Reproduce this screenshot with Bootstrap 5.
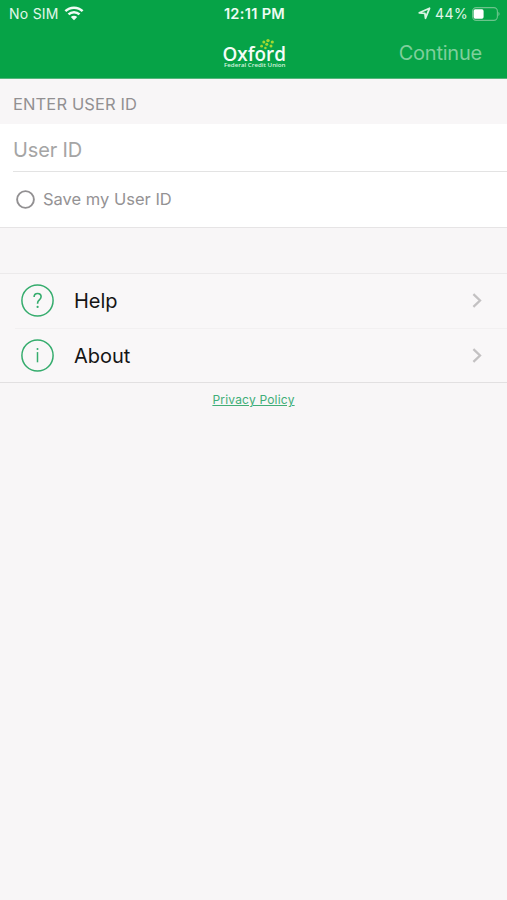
<!DOCTYPE html>
<html lang="en">
<head>
<meta charset="utf-8">
<meta name="viewport" content="width=device-width, initial-scale=1">
<title>Oxford Federal Credit Union</title>
<link href="https://cdn.jsdelivr.net/npm/bootstrap@5.3.0/dist/css/bootstrap.min.css" rel="stylesheet">
<style>
body{font-family:Inter,"Liberation Sans",sans-serif;background:#f8f6f7;color:#151515;min-height:900px;overflow-x:hidden}
svg{display:block;flex-shrink:0}
.top-area{background:#06a347;height:79px;border-bottom:1px solid #55b57c}
.status-bar{height:27px;font-size:14px;line-height:27px;color:#e2f7ea;padding:0 7px 0 9px}
.status-bar>div,.title-bar>div{flex:1 1 0}
.carrier{letter-spacing:.25px;margin-right:1px}
.percent{letter-spacing:.35px}
.clock{font-size:14.6px;font-weight:600;color:#eefbf3;letter-spacing:.3px;padding-top:2px}
.title-bar{height:51px;padding:0 25px}
.continue-btn{font-size:20px;line-height:50px;color:#7fcf9c;letter-spacing:-.23px}
.brand-logo{overflow:visible}
.section-label{height:45px;font-size:16.5px;line-height:50px;padding-left:13px;color:#929092;letter-spacing:.12px}
.form-area{height:104px;background:#fff;border-bottom:1px solid #e6e4e5}
.user-field{height:48px;margin-left:13px;border:0;border-bottom:1px solid #e3e3e3;border-radius:0;padding:4px 0 0;font-size:20px;letter-spacing:-.15px;width:494px;background:#fff}
.user-field::placeholder{color:#a5a5a5;opacity:1}
.save-row{height:55px;padding-left:16px;gap:8px;font-size:16.5px;color:#949294}
.menu-list{margin-top:45px;border-top:1px solid #eceaeb;border-bottom:1px solid #e2e0e1;border-radius:0}
.menu-row{height:54px;padding:0 25px 0 21px;background:#f9f7f8;color:#151515;font-size:20px;border:0}
.menu-row:first-child{padding-bottom:1px}
.menu-row+.menu-row::before{content:"";position:absolute;left:15px;right:0;top:0;border-top:1px solid #f2f0f1}
.row-label{margin-left:20px;padding-top:1px}
.policy-link{font-size:12px;line-height:18px;color:#41ae77;letter-spacing:.2px}
</style>
</head>
<body>
<header class="top-area">
  <div class="status-bar d-flex align-items-center">
    <div class="d-flex align-items-center"><span class="carrier">No SIM</span>
      <svg class="ms-1" width="20" height="15" viewBox="0 0 20 15" fill="none" stroke="#f0fbf4" stroke-width="2.5"><path d="M1.4 5.2a12.2 12.2 0 0 1 17.2 0M4.5 8.4a7.8 7.8 0 0 1 11 0"/><path d="M6.8 11a4.5 4.5 0 0 1 6.4 0L10 14.3z" fill="#f0fbf4" stroke="none"/></svg>
    </div>
    <span class="clock">12:11 PM</span>
    <div class="d-flex align-items-center justify-content-end">
      <svg width="13" height="13" viewBox="0 0 13 13" fill="none" stroke="#d9f4e3" stroke-width="1.8" stroke-linejoin="round"><path d="M1.3 5.8 11.5 1.3 7.5 11.2 6.9 6.4z"/></svg>
      <span class="percent ms-1">44%</span>
      <svg class="ms-1" width="28" height="14" viewBox="0 0 28 14"><rect x=".6" y=".6" width="24.8" height="12.8" rx="3.6" fill="none" stroke="#6cc48c" stroke-width="1.1"/><rect x="1.6" y="2.3" width="10" height="9.4" rx="1.6" fill="#fff"/><path d="M26.4 4.8q2.4 2.2 0 4.4z" fill="#6cc48c"/></svg>
    </div>
  </div>
  <nav class="title-bar d-flex align-items-center">
    <div></div>
    <svg class="brand-logo" width="66" height="32" viewBox="0 0 66 32" role="img" aria-label="Oxford Federal Credit Union">
      <text x="1.5" y="23.6" font-family="Open Sans" font-size="20" font-weight="600" fill="#f4fdf7" textLength="63.5" lengthAdjust="spacingAndGlyphs">Oxford</text>
      <text x="3" y="29.8" font-family="Open Sans" font-size="6" font-weight="600" fill="#d4f3df" textLength="61.5" lengthAdjust="spacingAndGlyphs">Federal Credit Union</text>
      <g fill="#a4d82f"><circle cx="47" cy="3.6" r="1.7"/><circle cx="42.8" cy="5.1" r="1.5"/><circle cx="51.3" cy="5" r="1.6"/><circle cx="45.8" cy="7.3" r="1.5"/><circle cx="40.6" cy="9.2" r="1.4"/><circle cx="50" cy="9" r="1.5"/><circle cx="44.4" cy="11" r="1.3"/></g>
    </svg>
    <div class="text-end"><span class="continue-btn">Continue</span></div>
  </nav>
</header>
<main>
  <div class="section-label"><span class="heading-text">ENTER USER ID</span></div>
  <form class="form-area">
    <input class="user-field d-block" type="text" placeholder="User ID" aria-label="User ID">
    <div class="save-row d-flex align-items-center">
      <svg width="19" height="19" viewBox="0 0 19 19"><circle cx="9.5" cy="9.5" r="8.4" fill="none" stroke="#929092" stroke-width="1.9"/></svg>
      <span class="save-text">Save my User ID</span>
    </div>
  </form>
  <div class="menu-list list-group">
    <a href="#" class="menu-row list-group-item list-group-item-action d-flex align-items-center">
      <svg width="33" height="33" viewBox="0 0 33 33" fill="none" stroke="#35ac6d" stroke-width="1.5"><circle cx="16.5" cy="16.5" r="15.6"/><path d="M13.1 13c0-2.3 1.4-3.5 3.5-3.5s3.5 1.3 3.5 3.3c0 3.1-3.5 3.1-3.5 6.3v.7" stroke-width="1.6"/><circle cx="16.6" cy="22.9" r="1.1" fill="#35ac6d" stroke="none"/></svg>
      <span class="row-label">Help</span>
      <svg class="ms-auto" width="10" height="15" viewBox="0 0 10 15" fill="none" stroke="#c3c1c2" stroke-width="2.3"><path d="M1.4 1.2 8 7.5 1.4 13.8"/></svg>
    </a>
    <a href="#" class="menu-row list-group-item list-group-item-action d-flex align-items-center">
      <svg width="33" height="33" viewBox="0 0 33 33" fill="none" stroke="#35ac6d" stroke-width="1.5"><circle cx="16.5" cy="16.5" r="15.6"/><path d="M16.5 13.1v10.2" stroke-width="1.5"/><circle cx="16.5" cy="10" r="1" fill="#35ac6d" stroke="none"/></svg>
      <span class="row-label">About</span>
      <svg class="ms-auto" width="10" height="15" viewBox="0 0 10 15" fill="none" stroke="#c3c1c2" stroke-width="2.3"><path d="M1.4 1.2 8 7.5 1.4 13.8"/></svg>
    </a>
  </div>
  <div class="policy-row d-flex justify-content-center pt-2"><a href="#" class="policy-link">Privacy Policy</a></div>
</main>
<script src="https://cdn.jsdelivr.net/npm/bootstrap@5.3.0/dist/js/bootstrap.bundle.min.js"></script>
</body>
</html>
